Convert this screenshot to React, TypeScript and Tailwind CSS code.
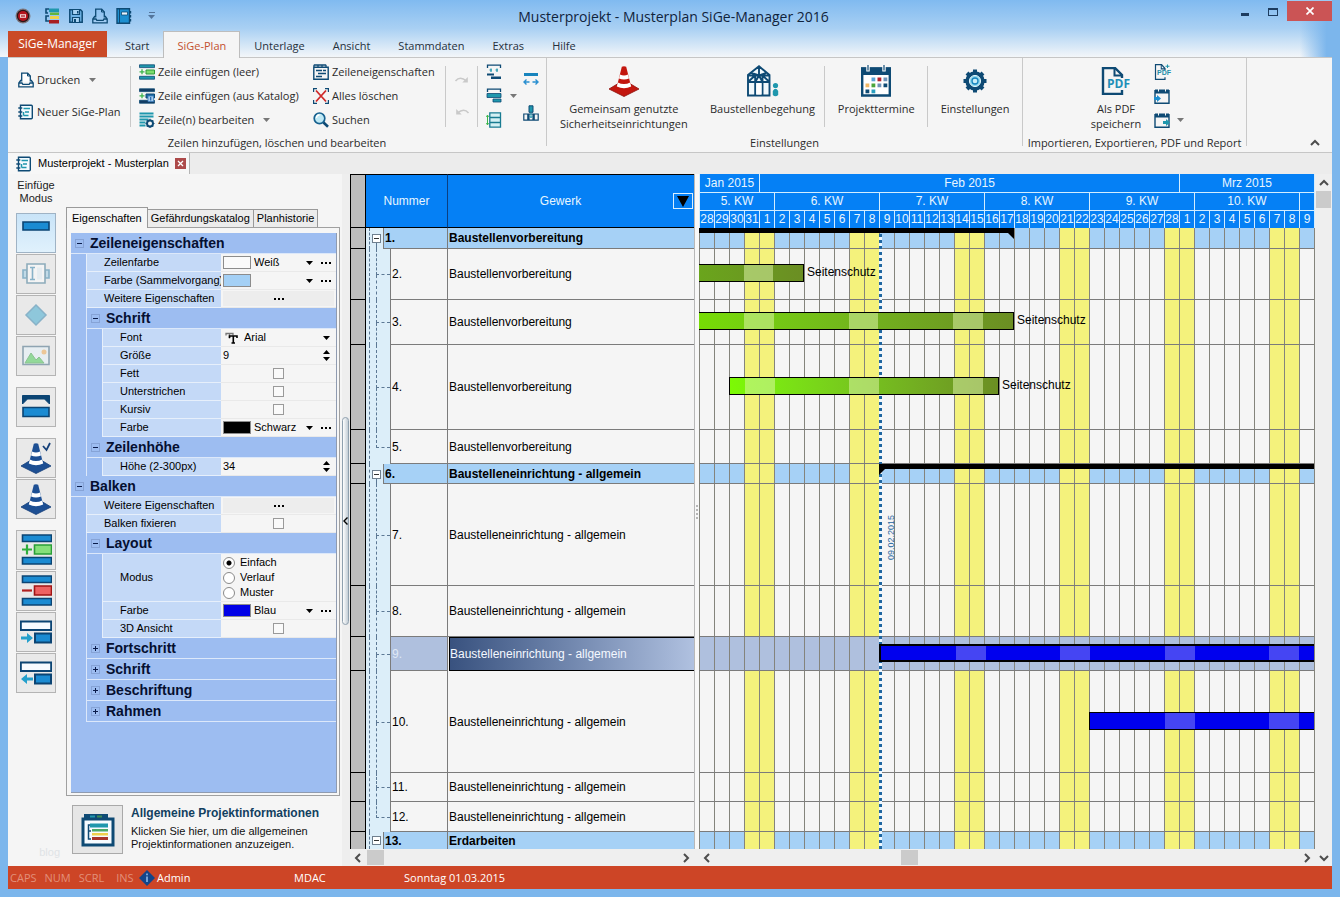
import React, { useState } from "react";
import type { ReactNode } from "react";

/* ---------- icons ---------- */

type IconProps = { className?: string };

const NAVY = "#0e4a74";
const TEAL = "#1f97ad";

function AppLogo() {
  return (
    <svg viewBox="0 0 16 16" className="size-4" aria-hidden="true">
      <circle cx="8" cy="8" r="7.5" fill="#7d757c" />
      <circle cx="8" cy="8" r="6.2" fill="#2b1518" />
      <circle cx="8" cy="8" r="5" fill="#b3141d" />
      <path d="M5 6.2h6v3.600H5z" fill="#f3d6d6" />
      <path d="M6 7.400h4v1.200H6z" fill="#a3131c" />
    </svg>
  );
}

function PlanColorIcon() {
  return (
    <svg viewBox="0 0 16 16" className="size-4" aria-hidden="true">
      <path d="M5 1H2v4h2M5 8H2v5h3" fill="none" stroke={NAVY} strokeWidth="1.6" />
      <path d="M5 .5h10v3.600H5z" fill={TEAL} />
      <path d="M6 4.500h9V7H6z" fill="#63b53c" />
      <path d="M6 8h9v3H6z" fill="#f0d24a" />
      <path d="M5 12h10v3.500H5z" fill="#a81f24" />
    </svg>
  );
}

function SaveIcon() {
  return (
    <svg viewBox="0 0 16 16" className="size-4" aria-hidden="true">
      <path d="M1.800 1.800h10.700l1.700 1.700v10.700H1.800z" fill="#6fb3e6" stroke={NAVY} strokeWidth="1.500" />
      <path d="M4.500 2v4.500h7V2M4.500 14V9.500h7V14" fill="#a9d3f3" stroke={NAVY} strokeWidth="1.200" />
      <path d="M9 3h1.500v2.400H9zM6 11h2v3H6z" fill={NAVY} />
    </svg>
  );
}

function PrinterIcon({ clear = false }: { clear?: boolean }) {
  return (
    <svg viewBox="0 0 16 16" className="size-4 shrink-0" aria-hidden="true">
      <path d="M3.700 9.500V1.200h6L12.300 4v5.500" fill={clear ? "none" : "#fff"} stroke={NAVY} strokeWidth="1.300" />
      <path d="M9.500 1.200V4h2.800" fill="none" stroke={NAVY} />
      <path d="M3 8 .800 11v3.800h14.400V11L13 8" fill="none" stroke={NAVY} strokeWidth="1.300" />
      <path d="M1 11h3l.800 1.300h6.400L12 11h3" fill="none" stroke={NAVY} strokeWidth="1.300" />
    </svg>
  );
}

function BookIcon() {
  return (
    <svg viewBox="0 0 16 16" className="size-4" aria-hidden="true">
      <path d="M1 .8h12.500v14.400H1z" fill="#1c8fd0" stroke={NAVY} strokeWidth="1.400" />
      <path d="M3.500 1v14" stroke={NAVY} />
      <path d="M5.500 4h6v3h-6z" fill="#e8f4fc" stroke={NAVY} strokeWidth=".8" />
      <path d="M14.500 3v2.500M14.500 7v2.500M14.500 11v2.500" stroke={NAVY} strokeWidth="1.400" />
    </svg>
  );
}

function NotebookIcon() {
  return (
    <svg viewBox="0 0 16 16" className="size-4 shrink-0" aria-hidden="true">
      <path d="M2.500 1.200h10.800q1 0 1 1v11.600q0 1-1 1H2.500z" fill="#f4fbff" stroke={NAVY} strokeWidth="1.400" />
      <path d="M.3 4h4M.3 8h4M.3 12h4" stroke={NAVY} strokeWidth="1.300" />
      <path d="M5.500 4.500h4M9 4.500h3M7 8h4M5.500 11.500h5M5.500 8v3.500" stroke={TEAL} strokeWidth="1.500" fill="none" />
    </svg>
  );
}

function RowInsertIcon({ dark = false }: { dark?: boolean }) {
  const c = dark ? "#123c63" : TEAL;
  return (
    <svg viewBox="0 0 16 16" className="size-4 shrink-0" aria-hidden="true">
      <path d="M.5 .8h15v2.800H.5zM.5 12.300h15v2.900H.5z" fill={c} stroke={NAVY} strokeWidth=".8" />
      <path d="M.5 7.800h5M3 5.300v5" stroke="#3ab54a" strokeWidth="1.300" />
      <path d="M7 6h8.500v4H7z" fill={dark ? "#1c6aa5" : "#7ddc6c"} stroke={dark ? NAVY : "#2f9a3a"} />
      {dark && <path d="M9 8h5.500v5.500H9z" fill="#a7cfee" stroke="#3d7fc0" strokeWidth=".8" />}
      {dark && <path d="M11.700 9v3.500" stroke="#2260a8" strokeWidth="1.200" />}
    </svg>
  );
}

function RowEditIcon() {
  return (
    <svg viewBox="0 0 16 16" className="size-4 shrink-0" aria-hidden="true">
      <path d="M.5 1.500h14M.5 4.500h14M.5 7.500h9M.5 10.500h6M.5 13.500h6" stroke={TEAL} strokeWidth="1.800" />
      <circle cx="11" cy="11.500" r="3" fill="#f5f5f5" stroke={NAVY} strokeWidth="2" />
      <path d="M11 6.800v2M11 14.200v1.800M6.500 11.500h2M13.500 11.500h2M7.800 8.300l1.200 1.200M13 13.500l1.200 1.200M14.200 8.300 13 9.500M9 13.500l-1.200 1.200" stroke={NAVY} strokeWidth="1.200" />
    </svg>
  );
}

function PropertiesIcon() {
  return (
    <svg viewBox="0 0 16 16" className="size-4 shrink-0" aria-hidden="true">
      <path d="M.8 1h12.400M.8 3.200h14.400v12H.8z" fill="none" stroke={NAVY} strokeWidth="1.400" />
      <path d="M1 1v2M5 1v2M9 1v2M13 1v2" stroke={NAVY} strokeWidth="1.200" />
      <path d="M3 6.500h6M10 6.500h3M5 9.500h8M3 12.500h6" stroke={NAVY} strokeWidth="1.600" />
    </svg>
  );
}

function DeleteAllIcon() {
  return (
    <svg viewBox="0 0 16 16" className="size-4 shrink-0" aria-hidden="true">
      <path d="M.6 4V.6H4M12 .6h3.400V4M15.400 12v3.400H12M4 15.400H.6V12" fill="none" stroke={NAVY} strokeWidth="1.200" />
      <path d="m3 2.500 10 11M13 2.500 3 13.500" stroke="#cf2a2a" strokeWidth="1.800" />
    </svg>
  );
}

function SearchIcon() {
  return (
    <svg viewBox="0 0 16 16" className="size-4 shrink-0" aria-hidden="true">
      <circle cx="6.500" cy="6.300" r="5.300" fill="#bfe9f5" stroke="#17618f" strokeWidth="1.700" />
      <path d="M3.500 6a3 3 0 0 1 3-3" stroke="#fff" strokeWidth="1.300" fill="none" />
      <path d="m10.500 10.500 4.500 4.300" stroke={NAVY} strokeWidth="2.600" />
    </svg>
  );
}

function RedoIcon({ flip = false }: { flip?: boolean }) {
  return (
    <svg viewBox="0 0 16 10" className={flip ? "h-2.5 w-4 -scale-x-100" : "h-2.5 w-4"} aria-hidden="true">
      <path d="M1.500 6Q6 .5 12.500 6" fill="none" stroke="#c9c9c9" strokeWidth="1.600" />
      <path d="M13.800 2v5.500H8.300z" fill="#c9c9c9" />
    </svg>
  );
}

function AlignIcon({ kind }: { kind: number }) {
  return (
    <svg viewBox="0 0 16 16" className="size-4" aria-hidden="true">
      {kind === 0 && (
        <>
          <path d="M1.500 4V1.200h13V4" fill="none" stroke={NAVY} strokeWidth="1.300" />
          <path d="M5 8V4.500M11 8V4.500M3.500 6H6M9.500 6H12" stroke={TEAL} strokeWidth="1.200" />
          <path d="M1 9.500h7v2H1zM5 12.500h10v2.500H5z" fill={NAVY} />
        </>
      )}
      {kind === 1 && (
        <>
          <path d="M1.500 4V1.200h13V4" fill="none" stroke={NAVY} strokeWidth="1.300" />
          <path d="M1 5.500h14v4H1zM7 11h8v3H7z" fill={TEAL} stroke={NAVY} strokeWidth=".8" />
        </>
      )}
      {kind === 2 && (
        <>
          <path d="M3.800 .8h10.700v14.400H3.800zM3.800 5.500h10.700M3.800 10.500h10.700" fill="#d4f0f4" stroke="#187b91" strokeWidth="1.300" />
          <path d="M.5 5 1.500 3l1 2M.5 11l1 2 1-2M1.500 4v8" fill="none" stroke="#3ab54a" />
        </>
      )}
      {kind === 3 && (
        <>
          <path d="M1 2h14v3H1z" fill="#1784bd" />
          <path d="M1 11h5.500M9.500 11H15M3.500 8.500 1 11l2.500 2.500M12.500 8.500 15 11l-2.500 2.500" fill="none" stroke="#2a8fd0" strokeWidth="1.400" />
        </>
      )}
      {kind === 4 && (
        <>
          <path d="M6 .8h4v6.500H6z" fill={TEAL} stroke={NAVY} />
          <path d="M.8 9h4v6.200h-4zM11.200 9h4v6.200h-4zM6 9h4v6.200H6z" fill="none" stroke={NAVY} strokeWidth="1.200" />
          <path d="M8 7.500v5M6.500 11 8 12.800 9.500 11" fill="none" stroke={TEAL} />
        </>
      )}
    </svg>
  );
}

function Cone({ color, dark, check = false }: { color: string; dark: string; check?: boolean }) {
  return (
    <svg viewBox="0 0 32 32" className="size-8" aria-hidden="true">
      <path d="M1 24 11 18h10l10 6-15 7.500z" fill={color} stroke={dark} strokeWidth=".8" />
      <path d="M13.800 1.800q2.200-1.200 4.400 0L23.500 23q-7.500 4-15 0z" fill={color} />
      <path d="M12 9.500q4 1.800 8 0l1 4q-5 2.200-10 0zM9.800 17.500q6.200 3.200 12.400 0l1 4q-7.200 3.600-14.400 0z" fill="#fff" />
      {check && <path d="m23 4 3.500 4L30 1" fill="none" stroke={dark} strokeWidth="1.800" />}
    </svg>
  );
}

function HouseIcon() {
  return (
    <svg viewBox="0 0 32 32" className="size-8" aria-hidden="true">
      <path d="M1 30.500V10L12 1.300 22.500 10v20.500zM1 10.500h21.500M1 17h21.500M8.200 10.500v20M15.500 10.500v20M12 2v8M4.500 8l7.500 2.500L19 8M1 17l7-6.500M22.500 17l-7-6.500M8.200 17l3.800-6.500 3.500 6.500" fill="#f0f8fc" stroke={NAVY} strokeWidth="1.900" />
      <path d="M9.300 29.500V18.200h5.200v11.300z" fill="#fff" />
      <circle cx="28.500" cy="20.500" r="2.600" fill={TEAL} />
      <path d="M25.800 26q2.700-4.500 5.400 0v4q-2.700 2.500-5.400 0z" fill={TEAL} />
    </svg>
  );
}

function CalendarIcon() {
  return (
    <svg viewBox="0 0 32 32" className="size-8" aria-hidden="true">
      <path d="M2.200 3.500h27.600v27H2.200z" fill="#fff" stroke={NAVY} strokeWidth="2.400" />
      <path d="M1 2.500h30V10H1z" fill={NAVY} />
      <path d="M8 0v6.500M24 0v6.500" stroke="#fff" strokeWidth="3.400" />
      <path d="M8 0v5.500M24 0v5.500" stroke={NAVY} strokeWidth="1.200" />
      <path d="M11.500 12.500h3.800v3.800h-3.800z" fill="#5da5d8" />
      <path d="M17.500 12.500h3.800v3.800h-3.800z" fill="#b2202a" />
      <path d="M23.500 12.500h3.800v3.800h-3.800zM17.500 18.500h3.800v3.800h-3.800z" fill="#6f93b8" />
      <path d="M5.500 18.500h3.800v3.800H5.500z" fill="#f0b765" />
      <path d="M11.500 18.500h3.800v3.800h-3.800z" fill="#4aa53c" />
      <path d="M23.500 18.500h3.800v3.800h-3.800zM5.500 24.500h3.800v3.800H5.500z" fill={NAVY} />
      <path d="M11.500 24.500h3.800v3.800h-3.800z" fill="#2a9fc0" />
    </svg>
  );
}

function GearIcon() {
  return (
    <svg viewBox="0 0 24 24" className="size-6" aria-hidden="true">
      <g stroke={NAVY} strokeWidth="4">
        <path d="M12 .5v23M.5 12h23M4 4l16 16M20 4 4 20" />
      </g>
      <circle cx="12" cy="12" r="9.700" fill={NAVY} />
      <circle cx="12" cy="12" r="5.600" fill="#8fd8ee" stroke="#dff5fb" />
      <circle cx="12" cy="12" r="3" fill="#c9eef8" stroke="#1784bd" strokeWidth="1.300" />
    </svg>
  );
}

function PdfIcon({ small = false }: { small?: boolean }) {
  return (
    <span className={small ? "relative block size-4" : "relative block h-7 w-8"}>
      <svg viewBox="0 0 32 28" className="size-full" preserveAspectRatio="none" aria-hidden="true">
        <path d="M22 23v4H3V1h12l7 7v3" fill="none" stroke={NAVY} strokeWidth="2.400" />
        <path d="M14.500 1v7.500H22" fill="none" stroke={NAVY} strokeWidth="2" />
        {small && <path d="M27 1v6M23 4h8" stroke={TEAL} strokeWidth="2" />}
      </svg>
      <span
        className={
          small
            ? "absolute top-[5px] left-[3px] font-['Liberation_Sans',sans-serif] text-[7px] leading-[7px] font-bold text-[#1f8fa8]"
            : "absolute top-[11px] left-[7px] text-[12px] leading-[12px] font-bold text-[#1f8fb8]"
        }
      >
        PDF
      </span>
    </span>
  );
}

function CalendarArrowIcon({ out = false }: { out?: boolean }) {
  return (
    <svg viewBox="0 0 16 16" className="size-4" aria-hidden="true">
      <path d="M1 2v13.200h14V2" fill="none" stroke={NAVY} strokeWidth="1.400" />
      <path d="M1 1.500h3v2h1v-2h6v2h1v-2h3v4H1z" fill={NAVY} />
      {out ? <path d="M9 9h3V7l4 3.500L12 14v-2H9z" fill="#1f97ad" /> : <path d="M0 9h3V7l4 3.500L3 14v-2H0z" fill="#1d8fd0" />}
    </svg>
  );
}

function Caret({ className = "" }: IconProps) {
  return (
    <svg viewBox="0 0 7 4" className={"h-1 w-[7px] shrink-0 " + className} aria-hidden="true">
      <path d="M0 0h7L3.500 4z" fill="currentColor" />
    </svg>
  );
}

function Chevron({ dir }: { dir: "up" | "down" | "left" | "right" }) {
  const d = {
    up: "M1 7l4-4 4 4",
    down: "M1 3l4 4 4-4",
    left: "M7 1 3 5l4 4",
    right: "M3 1l4 4-4 4",
  }[dir];
  return (
    <svg viewBox="0 0 10 10" className="size-2.5" aria-hidden="true">
      <path d={d} fill="none" stroke="#4d4d4d" strokeWidth="2" />
    </svg>
  );
}

/* ---------- title bar and ribbon ---------- */

function TitleBar() {
  return (
    <header className="flex h-[31px] items-center pl-[7px]">
      <div className="flex flex-1 items-center">
        <AppLogo />
        <div className="ml-[13px] flex items-center gap-2">
          <button aria-label="Plan"><PlanColorIcon /></button>
          <button aria-label="Speichern"><SaveIcon /></button>
          <button aria-label="Drucken"><PrinterIcon clear /></button>
          <button aria-label="Buch"><BookIcon /></button>
        </div>
        <button aria-label="Symbolleiste anpassen" className="ml-4 flex flex-col items-center gap-0.5 text-[#53759b]">
          <span className="h-px w-[6px] bg-current" />
          <Caret />
        </button>
      </div>
      <h1 className="pt-0.5 text-[14px] text-[#10233c]">Musterprojekt - Musterplan SiGe-Manager 2016</h1>
      <div className="flex flex-1 items-start justify-end self-stretch">
        <button aria-label="Minimieren" className="flex h-5 w-7 items-center justify-center pt-2"><span className="h-[3px] w-2 bg-[#1d3c5f]" /></button>
        <button aria-label="Maximieren" className="flex h-5 w-7 items-center justify-center pt-1"><span className="h-2 w-2.5 border border-t-2 border-[#1d3c5f]" /></button>
        <button aria-label="Schließen" className="flex h-[21px] w-[45px] items-center justify-center border-t border-[#9cc9f2] bg-[#cb5455]">
          <svg viewBox="0 0 8 8" className="size-2" aria-hidden="true"><path d="m.5 .5 7 7M7.500 .5l-7 7" stroke="#fff" strokeWidth="1.700" /></svg>
        </button>
      </div>
    </header>
  );
}

const TABS = ["Start", "SiGe-Plan", "Unterlage", "Ansicht", "Stammdaten", "Extras", "Hilfe"];

function RibbonTabs() {
  const [active, setActive] = useState("SiGe-Plan");
  return (
    <nav className="flex h-[26px] text-[11px] text-[#26303c]">
      <button className="w-[99px] bg-[#ca4a27] text-[12px] text-white">SiGe-Manager</button>
      <div className="flex pl-1" role="tablist">
        {TABS.map((t) => (
          <button
            key={t}
            role="tab"
            aria-selected={t === active}
            onClick={() => setActive(t)}
            className={
              t === active
                ? "z-10 -mb-px border border-b-0 border-[#bdbdbd] bg-[#f5f5f5] px-[13px] pt-0.5 text-[#c4502f]"
                : "px-3.5 pt-1"
            }
          >
            {t}
          </button>
        ))}
      </div>
    </nav>
  );
}

function SmallCmd({ icon, children, drop = false }: { icon: ReactNode; children: ReactNode; drop?: boolean }) {
  return (
    <button className="flex h-6 items-center gap-[3px] whitespace-nowrap">
      {icon}
      <span>{children}</span>
      {drop && <Caret className="ml-1.5 text-[#777]" />}
    </button>
  );
}

function BigCmd({ icon, children, className }: { icon: ReactNode; children: ReactNode; className: string }) {
  return (
    <button className={"flex flex-col items-center leading-[15px] " + className}>
      <span className="mb-1 flex h-8 items-center">{icon}</span>
      {children}
    </button>
  );
}

function Sep() {
  return <span className="mt-[1px] h-[61px] w-px bg-[#c9c9c9]" />;
}

function Group({ label, className, children }: { label: string; className: string; children: ReactNode }) {
  return (
    <section className={"flex h-[88px] shrink-0 flex-col border-r border-[#c9c9c9] " + className}>
      <div className="flex h-[77px] shrink-0 pt-[7px]">{children}</div>
      <p className="text-center leading-4 whitespace-nowrap">{label}</p>
    </section>
  );
}

function Ribbon() {
  return (
    <div className="flex h-24 border-y border-[#c6c6c6] bg-[#f5f5f5] text-[11px] text-[#2b2b2b]">
      <Group label="Zeilen hinzufügen, löschen und bearbeiten" className="w-[539px]">
        <div className="flex w-[122px] flex-col gap-2 pt-[3px] pl-2.5">
          <SmallCmd icon={<PrinterIcon />} drop>Drucken</SmallCmd>
          <SmallCmd icon={<NotebookIcon />}>Neuer SiGe-Plan</SmallCmd>
        </div>
        <Sep />
        <div className="-mt-[5px] flex w-[174px] flex-col pl-2">
          <SmallCmd icon={<RowInsertIcon />}>Zeile einfügen (leer)</SmallCmd>
          <SmallCmd icon={<RowInsertIcon dark />}>Zeile einfügen (aus Katalog)</SmallCmd>
          <SmallCmd icon={<RowEditIcon />} drop>Zeile(n) bearbeiten</SmallCmd>
        </div>
        <div className="-mt-[5px] flex w-[140px] flex-col pl-2">
          <SmallCmd icon={<PropertiesIcon />}>Zeileneigenschaften</SmallCmd>
          <SmallCmd icon={<DeleteAllIcon />}>Alles löschen</SmallCmd>
          <SmallCmd icon={<SearchIcon />}>Suchen</SmallCmd>
        </div>
        <Sep />
        <div className="flex w-[31px] flex-col items-center gap-[22px] pt-2.5">
          <button aria-label="Wiederholen"><RedoIcon /></button>
          <button aria-label="Rückgängig"><RedoIcon flip /></button>
        </div>
        <Sep />
        <div className="-mt-px flex w-8 flex-col items-center gap-2">
          <button aria-label="Balken verteilen" className="flex"><AlignIcon kind={0} /></button>
          <button aria-label="Balken ausrichten" className="flex"><AlignIcon kind={1} /></button>
          <button aria-label="Zeilenhöhe anpassen" className="flex"><AlignIcon kind={2} /></button>
        </div>
        <Caret className="mt-[29px] text-[#777]" />
        <div className="flex w-7 flex-col items-center gap-[18px] pt-1.5">
          <button aria-label="Breite anpassen" className="flex"><AlignIcon kind={3} /></button>
          <button aria-label="Verknüpfen" className="flex"><AlignIcon kind={4} /></button>
        </div>
      </Group>
      <Group label="Einstellungen" className="w-[476px]">
        <BigCmd className="w-[154px]" icon={<Cone color="#c3170f" dark="#8d100b" />}>
          Gemeinsam genutzte
          <br />
          Sicherheitseinrichtungen
        </BigCmd>
        <BigCmd className="w-[124px]" icon={<HouseIcon />}>Baustellenbegehung</BigCmd>
        <Sep />
        <BigCmd className="w-[102px]" icon={<CalendarIcon />}>Projekttermine</BigCmd>
        <Sep />
        <BigCmd className="w-[94px]" icon={<GearIcon />}>Einstellungen</BigCmd>
      </Group>
      <Group label="Importieren, Exportieren, PDF und Report" className="w-[224px]">
        <BigCmd className="ml-[60px] w-[66px]" icon={<PdfIcon />}>
          Als PDF
          <br />
          speichern
        </BigCmd>
        <div className="-mt-px flex w-[26px] flex-col items-center gap-2">
          <button aria-label="PDF exportieren" className="flex"><PdfIcon small /></button>
          <button aria-label="Termine importieren" className="flex"><CalendarArrowIcon /></button>
          <button aria-label="Termine exportieren" className="flex"><CalendarArrowIcon out /></button>
        </div>
        <Caret className="mt-[53px] ml-0.5 text-[#777]" />
      </Group>
      <button aria-label="Menüband minimieren" className="mr-3 mb-1 ml-auto self-end"><Chevron dir="up" /></button>
    </div>
  );
}

/* ---------- tool column ---------- */

const BAR = { fill: "#1b8bd2", stroke: "#0b4473", strokeWidth: 1.6 };

function ToolSvg({ children, faded = false }: { children: ReactNode; faded?: boolean }) {
  return (
    <svg viewBox="0 0 32 32" className={faded ? "size-8 opacity-50" : "size-8"} aria-hidden="true">
      {children}
    </svg>
  );
}

const TOOL_GROUPS: { label: string; icon: ReactNode; active?: boolean }[][] = [
  [
    { label: "Balken", active: true, icon: <ToolSvg><path d="M3 5h26v8H3z" {...BAR} /></ToolSvg> },
    {
      label: "Textfeld",
      icon: (
        <ToolSvg faded>
          <path d="M3 12h4v8H3zM25 12h4v8h-4z" fill="#9bcde6" stroke="#2a7ca8" strokeWidth="1.600" />
          <path d="M7 6h18v19H7z" fill="#fff" stroke="#35708f" strokeWidth="1.600" />
          <path d="M10 9.500h5M10 21.500h5M12.500 9.500v12" fill="none" stroke="#2a7ca8" strokeWidth="1.600" />
          <path d="M17 9.500h5v12h-5z" fill="#e4f2f9" />
        </ToolSvg>
      ),
    },
    { label: "Meilenstein", icon: <ToolSvg faded><path d="m16 6 10 10-10 10L6 16z" fill="#35a7cf" stroke="#2a7ca8" strokeWidth="1.500" /></ToolSvg> },
    {
      label: "Bild",
      icon: (
        <ToolSvg faded>
          <path d="M3 6.500h26v18H3z" fill="#e6f4fb" stroke="#37617c" strokeWidth="1.600" />
          <circle cx="24" cy="12" r="2.500" fill="#f0a64a" />
          <path d="m5 23 6-10 5 7 3-3 5 6z" fill="#3ecb4c" stroke="#2f9c3c" />
        </ToolSvg>
      ),
    },
  ],
  [
    {
      label: "Sammelbalken",
      icon: (
        <ToolSvg>
          <path d="M2.500 4.500h27V13l-5-5h-17l-5 5z" fill="#0b4473" stroke="#0b4473" />
          <path d="M3 16.500h26v9H3z" {...BAR} />
        </ToolSvg>
      ),
    },
  ],
  [
    { label: "Sicherung prüfen", icon: <Cone color="#1d4f93" dark="#143f78" check /> },
    { label: "Sicherung", icon: <Cone color="#1d4f93" dark="#143f78" /> },
  ],
  [
    {
      label: "Zeile einfügen",
      icon: (
        <ToolSvg>
          <path d="M2.500 1h29v6.500h-29zM2.500 23.500h29V30h-29z" {...BAR} />
          <path d="M2 15.500h10M7 10.500v10" stroke="#2eae3c" strokeWidth="2.200" />
          <path d="M14.500 11h17v9h-17z" fill="#86e07a" stroke="#2a9e38" strokeWidth="1.600" />
        </ToolSvg>
      ),
    },
    {
      label: "Zeile löschen",
      icon: (
        <ToolSvg>
          <path d="M2.500 1h29v6.500h-29zM2.500 23.500h29V30h-29z" {...BAR} />
          <path d="M2 15.500h10" stroke="#b02020" strokeWidth="2.200" />
          <path d="M14.500 11h17v9h-17z" fill="#ee6262" stroke="#a01515" strokeWidth="1.600" />
        </ToolSvg>
      ),
    },
    {
      label: "Einrücken",
      icon: (
        <ToolSvg>
          <path d="M.8 5.500h30.400v8.500H.8z" fill="#f7fbff" stroke="#0b4473" strokeWidth="2" />
          <path d="M15 17.500h16v9H15z" {...BAR} strokeWidth={2} />
          <path d="M1 20.500h6V17l6 5-6 5v-3.500H1z" fill="#24a0cc" />
        </ToolSvg>
      ),
    },
    {
      label: "Ausrücken",
      icon: (
        <ToolSvg>
          <path d="M.8 5.500h30.400v8.500H.8z" fill="#f7fbff" stroke="#0b4473" strokeWidth="2" />
          <path d="M15 17.500h16v9H15z" {...BAR} strokeWidth={2} />
          <path d="M13 20.500H7V17l-6 5 6 5v-3.500h6z" fill="#24a0cc" />
        </ToolSvg>
      ),
    },
  ],
];

function ToolColumn() {
  return (
    <aside className="mr-0.5 flex w-14 shrink-0 flex-col items-center pt-[5px]">
      <p className="text-center text-[11px] leading-[13px] text-[#222]">
        Einfüge
        <br />
        Modus
      </p>
      <div className="mt-2 flex flex-col gap-[11px]">
        {TOOL_GROUPS.map((g, i) => (
          <div key={i} className="flex flex-col gap-px">
            {g.map((t) => (
              <button
                key={t.label}
                aria-label={t.label}
                className={
                  t.active
                    ? "flex size-10 items-center justify-center border border-[#9fb3c5] bg-linear-to-b from-[#c9e4f8] to-[#e0f1fc]"
                    : "flex size-10 items-center justify-center border border-[#b4b4b4] bg-[#e9e9e9]"
                }
              >
                {t.icon}
              </button>
            ))}
          </div>
        ))}
      </div>
      <span className="mt-auto mb-2 self-end pr-1 text-[11px] leading-3 text-[#dfe3e6]">blog</span>
    </aside>
  );
}

/* ---------- property grid ---------- */

type Editor =
  | { kind: "color"; swatch: string; text: string }
  | { kind: "dots" }
  | { kind: "font"; text: string }
  | { kind: "number"; text: string }
  | { kind: "check" }
  | { kind: "radio"; options: string[] };

type PropRow =
  | { type: "cat"; level: 1 | 2; label: string; open: boolean }
  | { type: "prop"; level: 1 | 2; label: string; editor: Editor };

const PROPS: PropRow[] = [
  { type: "cat", level: 1, label: "Zeileneigenschaften", open: true },
  { type: "prop", level: 1, label: "Zeilenfarbe", editor: { kind: "color", swatch: "bg-[#fafafa]", text: "Weiß" } },
  { type: "prop", level: 1, label: "Farbe (Sammelvorgang)", editor: { kind: "color", swatch: "bg-[#a4d0f5]", text: "" } },
  { type: "prop", level: 1, label: "Weitere Eigenschaften", editor: { kind: "dots" } },
  { type: "cat", level: 2, label: "Schrift", open: true },
  { type: "prop", level: 2, label: "Font", editor: { kind: "font", text: "Arial" } },
  { type: "prop", level: 2, label: "Größe", editor: { kind: "number", text: "9" } },
  { type: "prop", level: 2, label: "Fett", editor: { kind: "check" } },
  { type: "prop", level: 2, label: "Unterstrichen", editor: { kind: "check" } },
  { type: "prop", level: 2, label: "Kursiv", editor: { kind: "check" } },
  { type: "prop", level: 2, label: "Farbe", editor: { kind: "color", swatch: "bg-black", text: "Schwarz" } },
  { type: "cat", level: 2, label: "Zeilenhöhe", open: true },
  { type: "prop", level: 2, label: "Höhe (2-300px)", editor: { kind: "number", text: "34" } },
  { type: "cat", level: 1, label: "Balken", open: true },
  { type: "prop", level: 1, label: "Weitere Eigenschaften", editor: { kind: "dots" } },
  { type: "prop", level: 1, label: "Balken fixieren", editor: { kind: "check" } },
  { type: "cat", level: 2, label: "Layout", open: true },
  { type: "prop", level: 2, label: "Modus", editor: { kind: "radio", options: ["Einfach", "Verlauf", "Muster"] } },
  { type: "prop", level: 2, label: "Farbe", editor: { kind: "color", swatch: "bg-[#0000e6]", text: "Blau" } },
  { type: "prop", level: 2, label: "3D Ansicht", editor: { kind: "check" } },
  { type: "cat", level: 2, label: "Fortschritt", open: false },
  { type: "cat", level: 2, label: "Schrift", open: false },
  { type: "cat", level: 2, label: "Beschriftung", open: false },
  { type: "cat", level: 2, label: "Rahmen", open: false },
];

function Dots() {
  return (
    <span className="flex gap-0.5">
      <span className="size-0.5 bg-black" />
      <span className="size-0.5 bg-black" />
      <span className="size-0.5 bg-black" />
    </span>
  );
}

function EditorCell({ id, editor }: { id: string; editor: Editor }) {
  switch (editor.kind) {
    case "color":
      return (
        <div className="flex h-full items-center pr-[5px] pl-0.5">
          <span className={"h-[13px] w-7 border border-[#8c8c8c] " + editor.swatch} />
          <input id={id} defaultValue={editor.text} className="w-0 min-w-0 flex-1 bg-transparent pl-[3px] outline-none" />
          <button aria-label="Farbe wählen"><Caret /></button>
          <button aria-label="Weitere Farben" className="ml-2"><Dots /></button>
        </div>
      );
    case "dots":
      return (
        <button id={id} aria-label="Weitere Eigenschaften" className="mx-0.5 my-px flex h-[15px] items-center justify-center bg-[#ededed]">
          <Dots />
        </button>
      );
    case "font":
      return (
        <div className="flex h-full items-center pr-1.5">
          <svg viewBox="0 0 14 12" className="ml-1 h-3 w-3.5" aria-hidden="true">
            <path d="M1 3.500V1.500h7v2M4.500 1.500v5" fill="none" stroke="#777" strokeWidth="1.300" />
            <path d="M4.500 6V4h7.500v2M8.300 4v7M6.500 11H10" fill="none" stroke="#000" strokeWidth="1.600" />
          </svg>
          <input id={id} defaultValue={editor.text} className="w-0 min-w-0 flex-1 bg-transparent pl-[5px] outline-none" />
          <button aria-label="Schriftart wählen"><Caret /></button>
        </div>
      );
    case "number":
      return (
        <div className="flex h-full items-center pr-1.5">
          <input id={id} defaultValue={editor.text} className="w-0 min-w-0 flex-1 bg-transparent pl-0.5 outline-none" />
          <span className="flex flex-col gap-[3px]">
            <button aria-label="Erhöhen" className="flex"><Caret className="rotate-180" /></button>
            <button aria-label="Verringern" className="flex"><Caret /></button>
          </span>
        </div>
      );
    case "check":
      return (
        <div className="flex h-full items-center justify-center">
          <input id={id} type="checkbox" className="size-[11px] appearance-none border border-[#9a9a9a] bg-[#fafafa] checked:bg-[#333]" />
        </div>
      );
    case "radio":
      return (
        <div id={id} role="radiogroup" aria-label="Modus" className="flex flex-col pt-px pl-0.5">
          {editor.options.map((o, i) => (
            <label key={o} className="flex h-[15px] items-center gap-[5px]">
              <input
                type="radio"
                name="modus"
                defaultChecked={i === 0}
                className="size-3 appearance-none rounded-full border border-[#8a8a8a] bg-white checked:bg-[radial-gradient(circle,#000_0_2px,#fff_3px)]"
              />
              {o}
            </label>
          ))}
        </div>
      );
  }
}

function PropertyGrid() {
  return (
    <div className="flex flex-1 flex-col border-r border-b border-[#8f9bb0] bg-[#9dbdf1] text-black">
      {PROPS.map((r, i) => {
        const id = "prop-" + i;
        if (r.type === "cat") {
          return (
            <div key={id} className={r.level === 1 ? "flex h-[21px]" : "flex h-[21px] pl-[15px]"}>
              <div
                className={
                  r.level === 1
                    ? "flex flex-1 items-center gap-1.5 border-b border-[#dce8fa] pl-1"
                    : "flex flex-1 items-center gap-1.5 border-b border-l border-[#dce8fa] pl-1"
                }
              >
                <button
                  aria-label={r.open ? r.label + " zuklappen" : r.label + " aufklappen"}
                  className="flex size-[9px] items-center justify-center border border-[#86a3d6]"
                >
                  <svg viewBox="0 0 5 5" className="size-[5px]" aria-hidden="true">
                    <path d={r.open ? "M0 2.500h5" : "M0 2.500h5M2.500 0v5"} stroke="#0a1c4a" />
                  </svg>
                </button>
                <h3 className="text-[14px] leading-5 font-bold text-[#050f30]">{r.label}</h3>
              </div>
            </div>
          );
        }
        const tall = r.editor.kind === "radio";
        return (
          <div key={id} className={tall ? "flex h-12" : "flex h-[18px]"}>
            <div className={r.level === 1 ? "w-[15px] shrink-0" : "ml-[15px] w-4 shrink-0 border-l border-[#dce8fa]"} />
            <label
              htmlFor={id}
              className={
                r.level === 1
                  ? "flex w-[135px] shrink-0 items-center overflow-hidden border-b border-l border-[#e6effb] bg-[#c4d9f7] pl-[17px] text-[11px] whitespace-nowrap"
                  : "flex w-[119px] shrink-0 items-center overflow-hidden border-b border-l border-[#e6effb] bg-[#c4d9f7] pl-[17px] text-[11px] whitespace-nowrap"
              }
            >
              {r.label}
            </label>
            <div className="flex min-w-0 flex-1 flex-col border-b border-[#e9e9e9] bg-[#f5f5f5] text-[11px]">
              <EditorCell id={id} editor={r.editor} />
            </div>
          </div>
        );
      })}
    </div>
  );
}

const PANEL_TABS = ["Eigenschaften", "Gefährdungskatalog", "Planhistorie"];

function PropertiesPanel() {
  const [tab, setTab] = useState("Eigenschaften");
  return (
    <div className="flex w-[276px] shrink-0 flex-col pt-[33px] pr-0.5">
      <div className="flex h-5 items-end text-[11px]" role="tablist">
        {PANEL_TABS.map((t) => (
          <button
            key={t}
            role="tab"
            aria-selected={t === tab}
            onClick={() => setTab(t)}
            className={
              t === tab
                ? "z-10 -mb-px h-[21px] border border-b-0 border-[#9a9a9a] bg-[#f6f6f6] px-[5px]"
                : "h-[18px] border border-b-0 border-l-0 border-[#9a9a9a] bg-[#ececec] px-[3px]"
            }
          >
            {t}
          </button>
        ))}
      </div>
      <div className="flex flex-1 flex-col border border-[#a0a0a0] bg-[#f6f6f6] pt-[5px] pr-0.5 pb-0.5 pl-1">
        <PropertyGrid />
      </div>
      <button className="mt-[9px] mb-3 flex items-start gap-2 pl-1.5 text-left">
        <span className="flex h-[49px] w-[51px] shrink-0 items-center justify-center border border-[#a9a9a9] bg-[#e6e6e6]">
          <svg viewBox="0 0 34 34" className="size-[34px]" aria-hidden="true">
            <path d="M3 1h24v5H3z" fill={NAVY} />
            <path d="M9 2.500h5v3H9z" fill={TEAL} />
            <path d="M16 2.500h5v3h-5z" fill="#3c8d55" />
            <path d="M2 6h30v26H2z" fill="#f6fbff" stroke={NAVY} strokeWidth="3" />
            <path d="M10 12H7.500v6H10M10 18H7.500v8H10" fill="none" stroke={NAVY} strokeWidth="1.500" />
            <path d="M9 10.500h18v4H9z" fill={TEAL} />
            <path d="M11 16h16v2.500H11z" fill="#4aa867" />
            <path d="M11 20h16v2.500H11z" fill="#efcf4c" />
            <path d="M11 24h16v3H11z" fill="#a8342a" />
          </svg>
        </span>
        <span className="text-[11px] leading-[13px] text-[#111]">
          <span className="mb-1 block text-[12px] leading-4 font-bold whitespace-nowrap text-[#12405f]">Allgemeine Projektinformationen</span>
          Klicken Sie hier, um die allgemeinen
          <br />
          Projektinformationen anzuzeigen.
        </span>
      </button>
    </div>
  );
}

/* ---------- plan table ---------- */

type Bar = { from: number; to: number; look: string; label?: string };
type PlanRow = {
  no: string;
  name: string;
  height: string;
  group?: boolean;
  last?: boolean;
  selected?: boolean;
  bar?: Bar;
  summary?: { from: number; to: number; cap: "start" | "end" };
};

const V = "Baustellenvorbereitung";
const A = "Baustelleneinrichtung - allgemein";

const ROWS: PlanRow[] = [
  { no: "1.", name: V, height: "h-[21px]", group: true, summary: { from: 0, to: 21, cap: "end" } },
  { no: "2.", name: V, height: "h-[51px]", bar: { from: 0, to: 7, look: "from-[#6aa51c] to-[#6b8e23] border-y border-r", label: "Seitenschutz" } },
  { no: "3.", name: V, height: "h-[45px]", bar: { from: 0, to: 21, look: "from-[#76dc04] to-[#6b8e23] border-y border-r", label: "Seitenschutz" } },
  { no: "4.", name: V, height: "h-[85px]", bar: { from: 2, to: 20, look: "from-[#7cfa04] to-[#6b8e23] border", label: "Seitenschutz" } },
  { no: "5.", name: V, height: "h-[34px]", last: true },
  { no: "6.", name: A, height: "h-5", group: true, summary: { from: 12, to: 41, cap: "start" } },
  { no: "7.", name: A, height: "h-[102px]" },
  { no: "8.", name: A, height: "h-[51px]" },
  { no: "9.", name: A, height: "h-[34px]", selected: true, bar: { from: 12, to: 41, look: "from-[#0000ee] to-[#0000ee] border-y-2 border-l-2" } },
  { no: "10.", name: A, height: "h-[102px]", bar: { from: 26, to: 41, look: "from-[#0000ee] to-[#0000ee] border-y border-l" } },
  { no: "11.", name: A, height: "h-[29px]" },
  { no: "12.", name: A, height: "h-[30px]", last: true },
  { no: "13.", name: "Erdarbeiten", height: "h-[17px]", group: true },
];

function TreeGutter({ row, more }: { row: PlanRow; more: boolean }) {
  const dash = "border-dashed border-[#5c7894]";
  if (row.group) {
    return (
      <div className="flex shrink-0 bg-[#dceef9] pr-0.5 pl-[3px]">
        <span className={"w-[3px] border-l " + dash} />
        <span className="flex w-[9px] flex-col items-center">
          <span className="flex-1" />
          <button
            aria-label={row.no + " zuklappen"}
            className="flex size-[9px] items-center justify-center border border-[#6f7f8e] bg-white"
          >
            <span className="h-px w-[5px] bg-[#333]" />
          </button>
          <span className={more ? "w-px flex-1 border-l " + dash : "flex-1"} />
        </span>
      </div>
    );
  }
  return (
    <div className="flex w-6 shrink-0 bg-[#dceef9] pl-[3px]">
      <span className={"w-[7px] border-l " + dash} />
      <span className="flex flex-1 flex-col">
        <span className={"flex-1 border-b border-l " + dash} />
        <span className={row.last ? "flex-1" : "flex-1 border-l " + dash} />
      </span>
    </div>
  );
}

function PlanTable() {
  return (
    <table className="w-full table-fixed border-separate border-spacing-0 text-[12px] text-black">
      <colgroup>
        <col className="w-4" />
        <col className="w-[82px]" />
        <col />
      </colgroup>
      <thead>
        <tr className="h-[54px] bg-[#0580f5] text-[#e8f6ff]">
          <td className="border border-black bg-[#bdbdbd] p-0" />
          <th className="border-y border-r border-y-black border-r-[#0b3f80] p-0 font-normal">Nummer</th>
          <th className="border-y border-black p-0 font-normal">
            <div className="flex items-center">
              <span className="flex-1">Gewerk</span>
              <button aria-label="Filter" className="mr-px flex h-4 w-5 items-center justify-center border border-[#d9efff]">
                <svg viewBox="0 0 12 11" className="h-[11px] w-3" aria-hidden="true"><path d="M0 0h12L6 11z" fill="#000" /></svg>
              </button>
            </div>
          </th>
        </tr>
      </thead>
      <tbody>
        {ROWS.map((r, i) => (
          <tr key={r.no}>
            <td className="p-0">
              <div className={"border-x border-black bg-[#bdbdbd] " + r.height + (i < 12 ? " border-b" : "")} />
            </td>
            <td className="p-0">
              <div className={"flex " + r.height}>
                <TreeGutter row={r} more={i < 12} />
                <div
                  className={
                    "flex flex-1 items-center border-r border-l border-[#7b7b7b] pl-px " +
                    (i < 12 ? "border-b " : "") +
                    (r.group ? "bg-[#a6d1f6] font-bold" : r.selected ? "bg-[#afc0de] text-[#dfe8f5]" : "bg-[#f5f5f5]")
                  }
                >
                  {r.no}
                </div>
              </div>
            </td>
            <td className="p-0">
              <div
                className={
                  "flex items-center whitespace-nowrap " +
                  r.height +
                  (i < 12 ? " border-b" : "") +
                  (r.group
                    ? " border-[#7b7b7b] bg-[#a6d1f6] pl-px font-bold"
                    : r.selected
                      ? " ml-px border-t border-l border-black bg-linear-to-r from-[#39527f] to-[#b0c1e0] text-[#f4f8ff]"
                      : " border-[#7b7b7b] bg-[#f5f5f5] pl-px")
                }
              >
                {r.name}
              </div>
            </td>
          </tr>
        ))}
      </tbody>
    </table>
  );
}

/* ---------- timeline ---------- */

const DAYS = [28, 29, 30, 31, ...Array.from({ length: 28 }, (_, i) => i + 1), 1, 2, 3, 4, 5, 6, 7, 8, 9];
const MONTHS = [
  { label: "Jan 2015", span: 4 },
  { label: "Feb 2015", span: 28 },
  { label: "Mrz 2015", span: 9 },
];
const WEEKS = [
  { label: "5. KW", span: 5 },
  { label: "6. KW", span: 7 },
  { label: "7. KW", span: 7 },
  { label: "8. KW", span: 7 },
  { label: "9. KW", span: 7 },
  { label: "10. KW", span: 7 },
  { label: "", span: 1 },
];
const isWeekend = (i: number) => i % 7 === 3 || i % 7 === 4;
const COLS = "grid grid-cols-[repeat(41,minmax(15px,1fr))]";

function TimelineHeader() {
  const cell = "flex min-w-0 items-center justify-center border-b border-l border-[#d3edff] whitespace-nowrap";
  return (
    <div className="border-r border-[#d3edff] bg-[#0580f5] text-[12px] text-[#e8f6ff]">
      <div className={COLS + " h-[18px]"}>
        {MONTHS.map((m) => (
          <div key={m.label} className={cell} style={{ gridColumn: `span ${m.span}` }}>{m.label}</div>
        ))}
      </div>
      <div className={COLS + " h-[18px]"}>
        {WEEKS.map((w) => (
          <div key={w.label} className={cell} style={{ gridColumn: `span ${w.span}` }}>{w.label}</div>
        ))}
      </div>
      <div className={COLS + " h-[18px]"}>
        {DAYS.map((d, i) => (
          <div key={i} className={cell}>{d}</div>
        ))}
      </div>
    </div>
  );
}

function TimelineRow({ row, line }: { row: PlanRow; line: boolean }) {
  const base = row.group ? "bg-[#a6d1f6]" : "bg-[#f5f5f5]";
  return (
    <div className={COLS + " " + row.height + (line ? " border-b border-[#7b7b7b]" : "")}>
      {DAYS.map((_, i) => (
        <div
          key={i}
          className={"row-start-1 border-l border-[#84847c] " + (row.selected ? "bg-[#afc0de]" : isWeekend(i) ? "bg-[#f4f27c]" : base)}
          style={{ gridColumn: i + 1 }}
        />
      ))}
      {row.summary && (
        <div className="z-10 row-start-1" style={{ gridColumn: `${row.summary.from + 1} / ${row.summary.to + 1}` }}>
          <div className="h-[5px] bg-black" />
          <svg viewBox="0 0 6 6" className={row.summary.cap === "end" ? "ml-auto size-1.5" : "size-1.5"} aria-hidden="true">
            <path d={row.summary.cap === "end" ? "M0 0h6v6z" : "M0 0h6L0 6z"} fill="#000" />
          </svg>
        </div>
      )}
      {row.bar && (
        <div
          className={"z-10 row-start-1 mb-0.5 flex h-[18px] self-center border-black bg-linear-to-r " + row.bar.look}
          style={{ gridColumn: `${row.bar.from + 1} / ${row.bar.to + 1}` }}
        >
          {DAYS.slice(row.bar.from, row.bar.to).map((_, k) => (
            <span key={k} className={isWeekend(row.bar!.from + k) ? (row.bar!.label ? "flex-1 bg-[#e4f8b0]/50" : "flex-1 bg-white/27") : "flex-1"} />
          ))}
        </div>
      )}
      {row.bar?.label && (
        <div
          className="z-10 row-start-1 mb-1 self-center pl-[3px] text-[12px] leading-4 whitespace-nowrap text-black"
          style={{ gridColumn: `${row.bar.to + 1} / span 6` }}
        >
          {row.bar.label}
        </div>
      )}
    </div>
  );
}

function Timeline() {
  return (
    <div className="overflow-hidden">
      <TimelineHeader />
      <div className="relative border-r border-[#84847c]">
        {ROWS.map((r, i) => (
          <TimelineRow key={r.no} row={r} line={i < 12} />
        ))}
        <div className={"pointer-events-none absolute inset-x-0 top-1.5 bottom-0 " + COLS}>
          <div className="flex items-start gap-1" style={{ gridColumn: "13 / span 2" }}>
            <span className="h-full w-[3px] shrink-0 bg-[repeating-linear-gradient(180deg,#1f66a0_0_3px,#f0f8ff_3px_6px)]" />
            <span className="mt-[281px] rotate-180 text-[9px] leading-[11px] text-[#1f66a0] [writing-mode:vertical-rl]">09.02.2015</span>
          </div>
        </div>
      </div>
    </div>
  );
}

function HScroll({ thumb }: { thumb: string }) {
  return (
    <div className="flex h-[17px] items-center justify-between bg-[#efefef] px-[3px]">
      <button aria-label="Nach links"><Chevron dir="left" /></button>
      <div className="flex flex-1 self-stretch">
        <span className={"my-px w-[17px] bg-[#cbcbcb] " + thumb} />
      </div>
      <button aria-label="Nach rechts"><Chevron dir="right" /></button>
    </div>
  );
}

function Plan() {
  return (
    <div className="flex min-w-0 flex-1 bg-[#efefef]">
      <div className="w-[344px] shrink-0">
        <PlanTable />
        <HScroll thumb="ml-1" />
      </div>
      <div className="mb-[17px] flex w-[5px] shrink-0 flex-col items-center justify-center gap-0.5 border-l border-[#b8b8b8] bg-[#f8f8f8]">
        {[0, 1, 2, 3].map((i) => (
          <span key={i} className="size-0.5 bg-[#b5b5b5]" />
        ))}
      </div>
      <div className="min-w-0 flex-1">
        <Timeline />
        <HScroll thumb="ml-[32%]" />
      </div>
      <div className="flex w-[17px] shrink-0 flex-col items-center bg-[#efefef]">
        <button aria-label="Nach oben" className="flex h-[17px] items-center"><Chevron dir="up" /></button>
        <span className="h-[17px] w-[15px] bg-[#cbcbcb]" />
        <button aria-label="Nach unten" className="mt-auto flex h-[17px] items-center"><Chevron dir="down" /></button>
      </div>
    </div>
  );
}

/* ---------- status bar ---------- */

function StatusBar() {
  return (
    <footer className="flex h-[23px] items-center bg-[#cd4526] pt-px text-[11px] text-white">
      <div className="flex w-[131px] gap-2 pl-0.5 text-[#e2907a]">
        <span>CAPS</span>
        <span>NUM</span>
        <span>SCRL</span>
        <span className="ml-1">INS</span>
      </div>
      <div className="flex w-[155px] items-center gap-0.5">
        <svg viewBox="0 0 16 16" className="size-4" aria-hidden="true">
          <path d="m8 0 8 8-8 8-8-8z" fill="#12458a" />
          <path d="M8 6.500V12M8 3.500v1.800" stroke="#8db7e8" strokeWidth="1.600" />
        </svg>
        Admin
      </div>
      <span className="w-[110px]">MDAC</span>
      <span>Sonntag 01.03.2015</span>
    </footer>
  );
}

export default function App() {
  return (
    <div className="flex min-h-screen flex-col bg-[#7cb6ec] px-2 pb-2 font-['Open_Sans','Noto_Sans',sans-serif]">
      <div className="-mx-2 bg-[linear-gradient(90deg,transparent_97%,#7cb6ec_99%),linear-gradient(180deg,#80baf0,#a9d0f3_50%,#f3f6f9)] px-2">
        <TitleBar />
        <RibbonTabs />
      </div>
      <Ribbon />
      <div className="flex h-[21px] items-start bg-[#ececec] font-['Liberation_Sans',Arial,sans-serif]">
        <div className="flex h-[21px] w-[182px] items-center border-r border-[#b5b5b5] bg-[#f7f7f7] pl-2 text-[11px] text-black">
          <NotebookIcon />
          <span className="ml-1.5 flex-1 whitespace-nowrap">Musterprojekt - Musterplan</span>
          <button aria-label="Tab schließen" className="mr-[3px] flex size-[11px] items-center justify-center bg-[#ad4a4a]">
            <svg viewBox="0 0 7 7" className="size-[7px]" aria-hidden="true"><path d="m1 1 5 5M6 1 1 6" stroke="#fff" strokeWidth="1.300" /></svg>
          </button>
        </div>
      </div>
      <main className="flex flex-1 bg-[#f5f5f5] font-['Liberation_Sans',Arial,sans-serif]">
        <ToolColumn />
        <PropertiesPanel />
        <div className="flex w-2 shrink-0 flex-col bg-[#eee] pt-[243px]">
          <button aria-label="Seitenleiste einklappen" className="flex h-[208px] w-[7px] items-center rounded-sm border border-[#8fa0ae] bg-linear-to-r from-white to-[#c3cdd5]">
            <svg viewBox="0 0 5 8" className="h-2 w-[5px] shrink-0" aria-hidden="true"><path d="M4.500 .5 1 4l3.500 3.500" fill="none" stroke="#000" strokeWidth="1.400" /></svg>
          </button>
        </div>
        <Plan />
      </main>
      <StatusBar />
    </div>
  );
}
